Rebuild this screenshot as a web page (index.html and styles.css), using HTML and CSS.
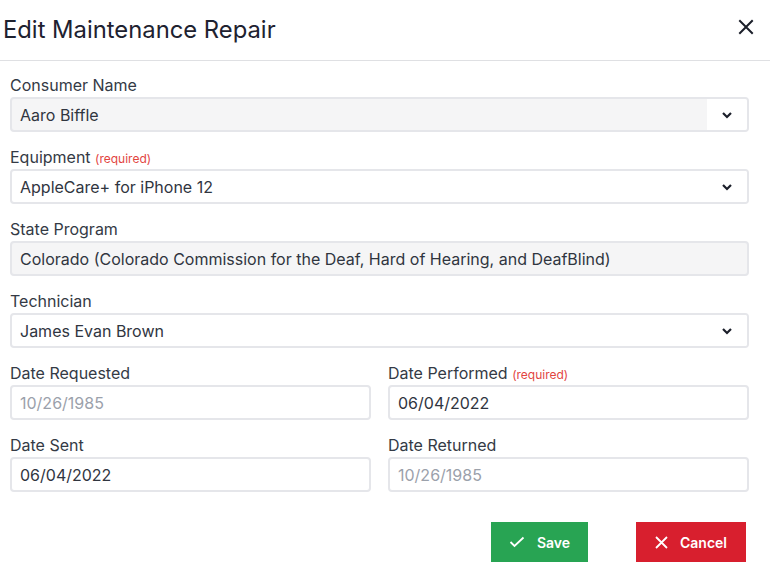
FILE: index.html
```html
<!DOCTYPE html>
<html>
<head>
<meta charset="utf-8">
<link rel="stylesheet" href="styles.css">
</head>
<body>
<div class="modal">
  <div class="modal-header">
    <h1 class="title">Edit Maintenance Repair</h1>
    <button class="close" aria-label="Close">
      <svg width="16" height="16" viewBox="0 0 16 16"><path d="M2 2L14 14M14 2L2 14" stroke="#1b1f2a" stroke-width="2" stroke-linecap="square"/></svg>
    </button>
  </div>
  <div class="modal-body">
    <div class="field">
      <label class="label">Consumer Name</label>
      <div class="box select disabled"><span class="value">Aaro Biffle</span><span class="arrow"><svg width="12" height="8" viewBox="0 0 12 8"><path d="M2 2L6 6L10 2" fill="none" stroke="#1b1f2a" stroke-width="2.2"/></svg></span></div>
    </div>
    <div class="field">
      <label class="label">Equipment <span class="req">(required)</span></label>
      <div class="box select"><span class="value">AppleCare+ for iPhone 12</span><span class="arrow"><svg width="12" height="8" viewBox="0 0 12 8"><path d="M2 2L6 6L10 2" fill="none" stroke="#1b1f2a" stroke-width="2.2"/></svg></span></div>
    </div>
    <div class="field">
      <label class="label">State Program</label>
      <div class="box disabled"><span class="value">Colorado (Colorado Commission for the Deaf, Hard of Hearing, and DeafBlind)</span></div>
    </div>
    <div class="field">
      <label class="label">Technician</label>
      <div class="box select"><span class="value">James Evan Brown</span><span class="arrow"><svg width="12" height="8" viewBox="0 0 12 8"><path d="M2 2L6 6L10 2" fill="none" stroke="#1b1f2a" stroke-width="2.2"/></svg></span></div>
    </div>
    <div class="grid">
      <div class="field">
        <label class="label">Date Requested</label>
        <div class="box"><span class="value placeholder">10/26/1985</span></div>
      </div>
      <div class="field">
        <label class="label">Date Performed <span class="req">(required)</span></label>
        <div class="box"><span class="value">06/04/2022</span></div>
      </div>
      <div class="field">
        <label class="label">Date Sent</label>
        <div class="box"><span class="value">06/04/2022</span></div>
      </div>
      <div class="field">
        <label class="label">Date Returned</label>
        <div class="box"><span class="value placeholder">10/26/1985</span></div>
      </div>
    </div>
  </div>
  <div class="modal-footer">
    <button class="btn btn-save">
      <svg width="16" height="12" viewBox="0 0 16 12"><path d="M1.5 6L5.5 10L14.5 1.5" fill="none" stroke="#fff" stroke-width="1.8"/></svg>
      Save
    </button>
    <button class="btn btn-cancel">
      <svg width="13" height="13" viewBox="0 0 13 13"><path d="M1 1L12 12M12 1L1 12" fill="none" stroke="#fff" stroke-width="1.8"/></svg>
      Cancel
    </button>
  </div>
</div>
</body>
</html>
```
FILE: styles.css
```css
* { box-sizing: border-box; }
body {
  margin: 0;
  background: #ffffff;
  font-family: Inter, "Noto Sans", sans-serif;
  color: #2c313b;
}
.modal { width: 770px; }
.modal-header {
  height: 61px;
  border-bottom: 1px solid #dfe0e3;
  display: flex;
  align-items: center;
  justify-content: space-between;
  padding: 0 16px 2px 3px;
}
.title {
  margin: 0;
  font-size: 23.8px;
  font-weight: 400;
  color: #1e2230;
}
.close {
  border: 0;
  background: none;
  padding: 0;
  width: 16px;
  height: 16px;
  margin-top: -4px;
  display: flex;
}
.modal-body {
  padding: 13px 21px 0 10px;
}
.field { margin-bottom: 14px; }
.label {
  display: block;
  height: 22px;
  line-height: 22px;
  margin-bottom: 1px;
  font-size: 16px;
  color: #343a45;
}
.req {
  font-size: 12px;
  color: #e2453f;
}
.box {
  height: 35px;
  border: 2px solid #e5e6ea;
  border-radius: 4px;
  background: #fff;
  display: flex;
  align-items: center;
  overflow: hidden;
}
.box.disabled { background: #f5f5f6; }
.value {
  flex: 1;
  padding-left: 8px;
  padding-top: 1px;
  font-size: 16px;
  color: #30353f;
  white-space: nowrap;
}
.placeholder { color: #9ba1ab; }
.arrow {
  width: 40px;
  height: 100%;
  background: #fff;
  display: flex;
  align-items: center;
  justify-content: center;
}
.grid {
  display: grid;
  grid-template-columns: 1fr 1fr;
  column-gap: 17px;
}
.modal-footer {
  display: flex;
  justify-content: flex-end;
  gap: 48px;
  padding: 16px 24px 0 0;
}
.btn {
  height: 40px;
  border: 0;
  border-radius: 0;
  display: flex;
  align-items: center;
  justify-content: center;
  gap: 12px;
  font-family: Inter, "Noto Sans", sans-serif;
  font-size: 14px;
  font-weight: 600;
  color: #fff;
}
.btn-save { width: 97px; background: #28a453; }
.btn-cancel { width: 110px; background: #d81f2e; }
```
